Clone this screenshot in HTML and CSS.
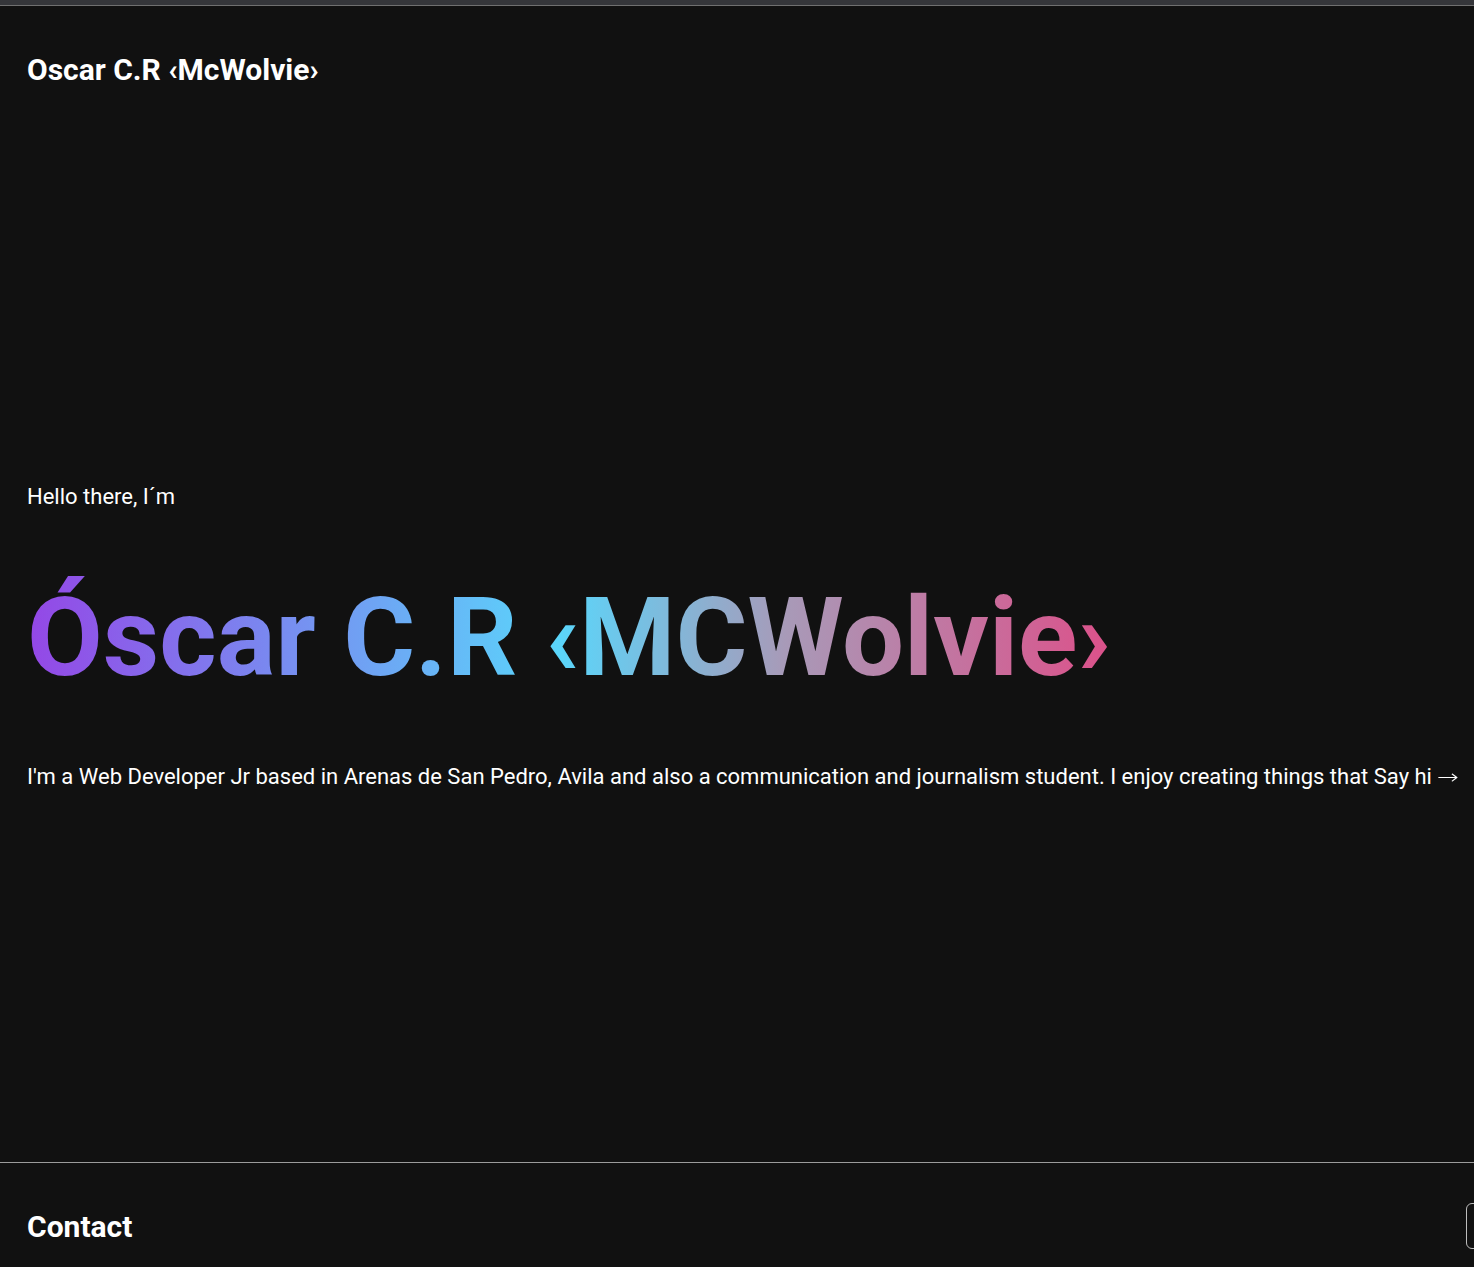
FILE: index.html
```html
<!DOCTYPE html>
<html lang="en">
<head>
<meta charset="utf-8">
<title>Oscar C.R ‹McWolvie›</title>
<link rel="stylesheet" href="styles.css">
</head>
<body>
<div class="topbar"></div>
<header class="site-header">
  <h1 class="brand">Oscar C.R ‹McWolvie›</h1>
</header>
<main class="hero">
  <p class="hello">Hello there, I´m</p>
  <h2 class="name"><span class="gradient">Óscar C.R ‹MCWolvie›</span></h2>
  <p class="intro">I'm a Web Developer Jr based in Arenas de San Pedro, Avila and also a communication and journalism student. I enjoy creating things that <a class="say-hi" href="#contact">Say hi <span class="arrow">→</span></a></p>
</main>
<footer class="site-footer" id="contact">
  <h2 class="contact-title">Contact</h2>
  <div class="contact-box"></div>
</footer>
</body>
</html>
```

FILE: styles.css
```css
html, body {
  margin: 0;
  padding: 0;
  background: #111111;
  color: #ffffff;
  font-family: Roboto, "Liberation Sans", sans-serif;
  overflow-x: hidden;
}

.topbar {
  height: 5px;
  background: #35363a;
  border-bottom: 1px solid #707070;
}

.site-header {
  padding: 46px 27px 0;
  height: 81px;
  box-sizing: border-box;
}

.brand {
  margin: 0;
  font-size: 30px;
  font-weight: 700;
  line-height: normal;
}

.hero {
  padding: 397px 27px 0;
  height: 1075px;
  box-sizing: border-box;
}

.hello {
  margin: 0;
  font-size: 22px;
  line-height: normal;
}

.name {
  margin: 64px 0 0;
  font-size: 110px;
  font-weight: 700;
  line-height: normal;
  letter-spacing: 0;
}

.gradient {
  display: inline-block;
  background: linear-gradient(90deg, #9447e6 0%, #5ad6fb 49%, #a89ab8 70%, #dc518a 100%);
  -webkit-background-clip: text;
  background-clip: text;
  color: transparent;
}

.intro {
  margin: 62px 0 0;
  font-size: 22px;
  line-height: normal;
  white-space: nowrap;
}

.say-hi {
  color: #ffffff;
  text-decoration: none;
}

.arrow {
  display: inline-block;
  font-family: "DejaVu Sans", sans-serif;
  font-size: 20px;
  font-weight: 300;
  line-height: 1;
  transform: scaleX(1.3);
  transform-origin: left center;
}

.site-footer {
  border-top: 1px solid #9c9c9c;
  padding: 46px 0 0 27px;
  display: flex;
  align-items: flex-start;
  justify-content: space-between;
  height: 105px;
  box-sizing: border-box;
}

.contact-title {
  margin: 0;
  font-size: 30px;
  font-weight: 700;
  line-height: normal;
}

.contact-box {
  margin-top: -6px;
  margin-right: -40px;
  width: 46px;
  height: 44px;
  border: 1px solid #bdbdbd;
  border-radius: 6px;
}
```
